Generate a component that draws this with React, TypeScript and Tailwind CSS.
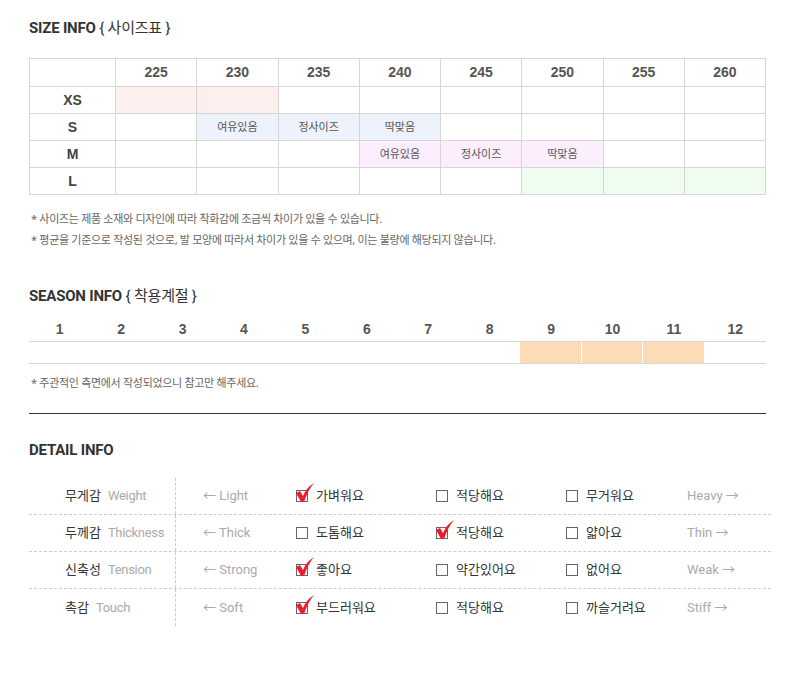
const font = { fontFamily: '"Noto Sans", "Noto Sans CJK KR", sans-serif' };
const latin = { fontFamily: 'Roboto, "Noto Sans CJK KR", sans-serif' };
const arial = { fontFamily: '"Liberation Sans", Arial, sans-serif' };

const sizes = ['225', '230', '235', '240', '245', '250', '255', '260'];

type Cell = { bg?: string; text?: string };
const rows: { label: string; cells: Cell[] }[] = [
  {
    label: 'XS',
    cells: [{ bg: 'bg-[#fdefed]' }, { bg: 'bg-[#fdefed]' }, {}, {}, {}, {}, {}, {}],
  },
  {
    label: 'S',
    cells: [
      {},
      { bg: 'bg-[#eef2fc]', text: '여유있음' },
      { bg: 'bg-[#eef2fc]', text: '정사이즈' },
      { bg: 'bg-[#eef2fc]', text: '딱맞음' },
      {},
      {},
      {},
      {},
    ],
  },
  {
    label: 'M',
    cells: [
      {},
      {},
      {},
      { bg: 'bg-[#fdeefd]', text: '여유있음' },
      { bg: 'bg-[#fdeefd]', text: '정사이즈' },
      { bg: 'bg-[#fdeefd]', text: '딱맞음' },
      {},
      {},
    ],
  },
  {
    label: 'L',
    cells: [{}, {}, {}, {}, {}, { bg: 'bg-[#effdf0]' }, { bg: 'bg-[#effdf0]' }, { bg: 'bg-[#effdf0]' }],
  },
];

const details = [
  { ko: '무게감', en: 'Weight', left: 'Light', right: 'Heavy', opts: ['가벼워요', '적당해요', '무거워요'], sel: 0 },
  { ko: '두께감', en: 'Thickness', left: 'Thick', right: 'Thin', opts: ['도톰해요', '적당해요', '얇아요'], sel: 1 },
  { ko: '신축성', en: 'Tension', left: 'Strong', right: 'Weak', opts: ['좋아요', '약간있어요', '없어요'], sel: 0 },
  { ko: '촉감', en: 'Touch', left: 'Soft', right: 'Stiff', opts: ['부드러워요', '적당해요', '까슬거려요'], sel: 0 },
];

function Box({ checked }: { checked: boolean }) {
  return (
    <span className="relative inline-block w-[12px] h-[12px] border border-[#666] bg-white">
      {checked && (
        <svg className="absolute left-[-2px] top-[-9px]" width="20" height="21" viewBox="0 0 20 21">
          <path d="M1 11 L5 9 L8 14 Q11 6 19 1 Q13 8 9 20 L6 20 Z" fill="#ee1d2c" />
        </svg>
      )}
    </span>
  );
}

function Heading({ main, sub }: { main: string; sub?: string }) {
  return (
    <h2 className="text-[15px] leading-[20px] text-[#333] tracking-[-0.2px]" style={latin}>
      <span className="font-bold">{main}</span>
      {sub && <span className="font-normal"> {sub}</span>}
    </h2>
  );
}

export default function App() {
  return (
    <div className="w-[800px] h-[680px] bg-white pl-[29px] pr-[34px] pt-[18px]" style={font}>
      <Heading main="SIZE INFO" sub="{ 사이즈표 }" />

      <table className="mt-[20px] w-[737px] border-collapse table-fixed text-[#555]">
        <colgroup>
          <col className="w-[86px]" />
          {sizes.map((s) => (
            <col key={s} />
          ))}
        </colgroup>
        <thead>
          <tr className="h-[28px]">
            <th className="border border-[#d6d6d6]" />
            {sizes.map((s) => (
              <th key={s} className="border border-[#d6d6d6] text-[14px] font-bold text-[#555]" style={arial}>
                {s}
              </th>
            ))}
          </tr>
        </thead>
        <tbody>
          {rows.map((r) => (
            <tr key={r.label} className="h-[27px]">
              <td className="border border-[#d6d6d6] text-center text-[14px] font-bold text-[#444]" style={arial}>
                {r.label}
              </td>
              {r.cells.map((c, i) => (
                <td key={i} className={`border border-[#d6d6d6] text-center text-[11px] text-[#555] ${c.bg ?? ''}`}>
                  {c.text}
                </td>
              ))}
            </tr>
          ))}
        </tbody>
      </table>

      <div className="mt-[13px] pl-[2px] text-[11px] leading-[21px] text-[#666] tracking-[-0.3px]">
        <p>* 사이즈는 제품 소재와 디자인에 따라 착화감에 조금씩 차이가 있을 수 있습니다.</p>
        <p>* 평균을 기준으로 작성된 것으로, 발 모양에 따라서 차이가 있을 수 있으며, 이는 불량에 해당되지 않습니다.</p>
      </div>

      <div className="mt-[36px]">
        <Heading main="SEASON INFO" sub="{ 착용계절 }" />
      </div>

      <div className="mt-[14px] w-[737px]">
        <div className="grid grid-cols-12 h-[22px] items-center border-b border-[#d6d6d6]">
          {Array.from({ length: 12 }, (_, i) => (
            <div key={i} className="text-center text-[14px] font-bold text-[#555] leading-none -mt-[3px]" style={arial}>
              {i + 1}
            </div>
          ))}
        </div>
        <div className="grid grid-cols-12 h-[22px] border-b border-[#d6d6d6]">
          {Array.from({ length: 12 }, (_, i) => (
            <div key={i} className={i >= 8 && i <= 10 ? 'bg-[#fddbb6] mr-[1px]' : ''} />
          ))}
        </div>
      </div>

      <p className="mt-[9px] pl-[2px] text-[11px] leading-[20px] text-[#666] tracking-[-0.3px]">
        * 주관적인 측면에서 작성되었으니 참고만 해주세요.
      </p>

      <div className="mt-[20px] w-[737px] border-t border-[#333]" />

      <div className="mt-[26px]">
        <Heading main="DETAIL INFO" />
      </div>

      <div className="mt-[18px] w-[742px]">
        {details.map((d, idx) => (
          <div
            key={d.ko}
            className={`flex items-center h-[37px] ${idx < details.length - 1 ? 'border-b border-dashed border-[#ccc]' : ''}`}
          >
            <div className="w-[147px] h-full flex items-center pl-[36px] border-r border-dashed border-[#ccc] whitespace-nowrap">
              <span className="text-[13px] text-[#333]">{d.ko}</span>
              <span className="ml-[7px] text-[13px] text-[#aaa] tracking-[-0.3px]" style={latin}>
                {d.en}
              </span>
            </div>
            <div className="w-[120px] pl-[27px] text-[13px] text-[#aaa] whitespace-nowrap" style={latin}>
              ← {d.left}
            </div>
            <div className="w-[140px] flex items-center gap-[8px] whitespace-nowrap">
              <Box checked={d.sel === 0} />
              <span className="text-[13px] text-[#333]">{d.opts[0]}</span>
            </div>
            <div className="w-[130px] flex items-center gap-[8px] whitespace-nowrap">
              <Box checked={d.sel === 1} />
              <span className="text-[13px] text-[#333]">{d.opts[1]}</span>
            </div>
            <div className="w-[121px] flex items-center gap-[8px] whitespace-nowrap">
              <Box checked={d.sel === 2} />
              <span className="text-[13px] text-[#333]">{d.opts[2]}</span>
            </div>
            <div className="text-[13px] text-[#aaa] whitespace-nowrap" style={latin}>
              {d.right} →
            </div>
          </div>
        ))}
      </div>
    </div>
  );
}
